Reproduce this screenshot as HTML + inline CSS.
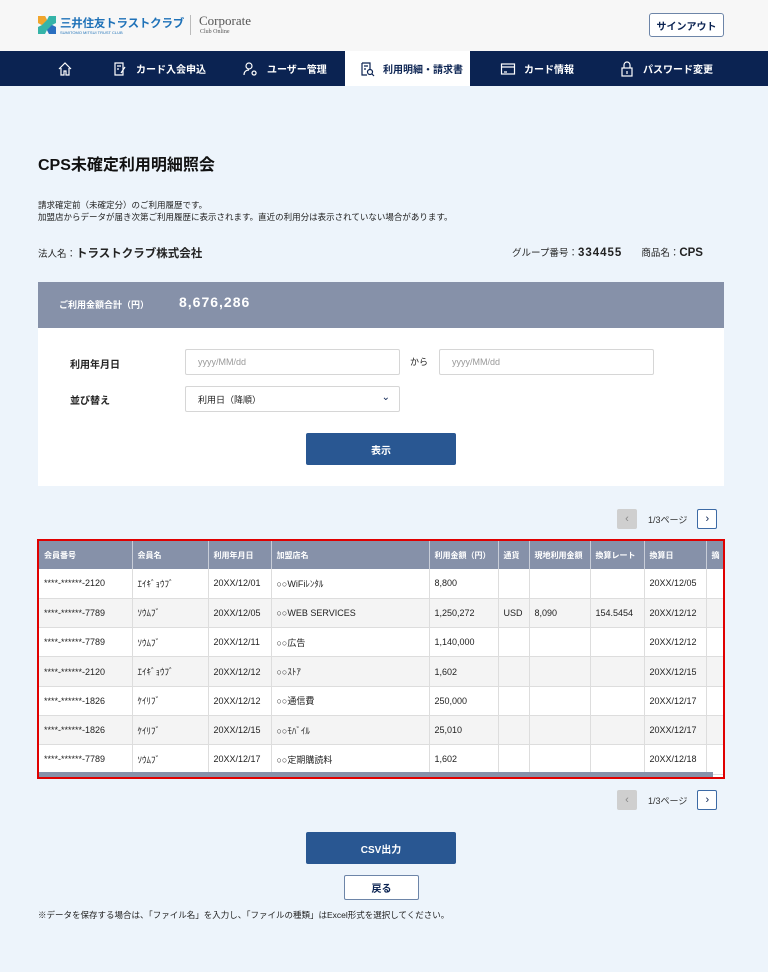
<!DOCTYPE html>
<html><head><meta charset="utf-8">
<style>
*{margin:0;padding:0;box-sizing:border-box}
body{width:768px;height:972px;background:#edf4fb;font-family:"Liberation Sans","Noto Sans CJK JP",sans-serif;color:#222;position:relative;overflow:hidden}
.abs{position:absolute}
.hdr{left:0;top:0;width:768px;height:51px;background:#f7f7f7}
.nav{left:0;top:51px;width:768px;height:35px;background:#0b2352}
.nav .it{position:absolute;top:0;height:35px;display:flex;align-items:center;color:#fff;font-size:10px;font-weight:bold;gap:8px}
.nav .act{background:#fff;color:#0b2352}
.btn{position:absolute;background:#295792;color:#fff;font-size:10px;font-weight:bold;display:flex;align-items:center;justify-content:center;border-radius:2px}
.wbtn{position:absolute;background:#fff;border:1px solid #6d85a8;color:#0b2352;font-size:10px;font-weight:bold;display:flex;align-items:center;justify-content:center;border-radius:2px}
.inp{position:absolute;background:#fff;border:1px solid #d6d6d6;border-radius:2px;font-size:9px;color:#999;padding-left:12px;display:flex;align-items:center}
table{border-collapse:collapse;font-size:9px;table-layout:fixed}
th{background:#8691a9;color:#fff;text-align:left;font-size:8px;font-weight:bold;height:28px;padding-left:5px;border-right:1px solid #c8cdd8;white-space:nowrap;overflow:hidden}
td{height:29.3px;padding-left:5px;border-right:1px solid #ddd;border-bottom:1px solid #ddd;white-space:nowrap;overflow:hidden;color:#222}
tr:nth-child(odd) td{background:#f4f4f4}
tr:nth-child(even) td{background:#fff}
.pg{position:absolute;display:flex;align-items:center;font-size:9px;color:#333}
.pg .p{width:20px;height:20px;background:#cfcfcf;color:#888;display:flex;align-items:center;justify-content:center;font-size:11px;border-radius:2px}
.pg .n{width:20px;height:20px;background:#fff;border:1px solid #3c6aa5;color:#0b2352;display:flex;align-items:center;justify-content:center;font-size:11px;border-radius:2px}
</style></head><body>
<div class="abs hdr"></div>
<svg class="abs" style="left:37px;top:15px" width="20" height="20" viewBox="0 0 20 20"><path d="M1 1h7l2 4 2-4h7v7l-4 2 4 2v7h-7l-2-4-2 4H1v-7l4-2-4-2z" fill="#35b4a8"/><path d="M1 1h7l2 4-5 5-4-2z" fill="#f1a52c"/><path d="M12 19l-2-4 5-5 4 2v7z" fill="#2a6fc0"/></svg>
<div class="abs" style="left:60px;top:15px;font-size:11.5px;color:#1f72b8;font-weight:bold;letter-spacing:-0.2px;white-space:nowrap">三井住友トラストクラブ</div>
<div class="abs" style="left:60px;top:30px;font-size:4px;color:#1f72b8;white-space:nowrap">SUMITOMO MITSUI TRUST CLUB</div>
<div class="abs" style="left:190px;top:15px;width:1px;height:20px;background:#bbb"></div>
<div class="abs" style="left:199px;top:13px;font-family:'Liberation Serif',serif;font-size:13px;color:#555">Corporate</div>
<div class="abs" style="left:200px;top:29px;font-family:'Liberation Serif',serif;font-size:6px;color:#555">Club Online</div>
<div class="wbtn" style="left:649px;top:13px;width:75px;height:24px;border-radius:3px">サインアウト</div>
<div class="abs nav">
<div class="it" style="left:57px"><svg width="16" height="16" viewBox="0 0 16 16" fill="none" stroke="#fff" stroke-width="1.2"><path d="M2 8L8 2l6 6M4 7v7h3v-4h2v4h3V7"/></svg></div>
<div class="it" style="left:112px"><svg width="16" height="16" viewBox="0 0 16 16" fill="none" stroke="#fff" stroke-width="1.2"><path d="M3 2h8v12H3zM5 5h4M5 8h2M9 12l4-6"/></svg>カード入会申込</div>
<div class="it" style="left:243px"><svg width="16" height="16" viewBox="0 0 16 16" fill="none" stroke="#fff" stroke-width="1.2"><circle cx="6" cy="5" r="3"/><path d="M1 14c0-4 3-5 5-5M11 10a2 2 0 1 0 .1 0"/></svg>ユーザー管理</div>
<div class="it act" style="left:345px;width:125px;padding-left:14px"><svg width="16" height="16" viewBox="0 0 16 16" fill="none" stroke="#0b2352" stroke-width="1.2"><path d="M3 2h8v6M3 2v12h5M5 5h4M5 8h2"/><circle cx="11" cy="11" r="2.5"/><path d="M13 13l2 2"/></svg>利用明細・請求書</div>
<div class="it" style="left:500px"><svg width="16" height="16" viewBox="0 0 16 16" fill="none" stroke="#fff" stroke-width="1.2"><rect x="1.5" y="3" width="13" height="10"/><path d="M1.5 6h13M4 11h3"/></svg>カード情報</div>
<div class="it" style="left:619px"><svg width="16" height="16" viewBox="0 0 16 16" fill="none" stroke="#fff" stroke-width="1.2"><rect x="3" y="7" width="10" height="8"/><path d="M5 7V4a3 3 0 0 1 6 0v3M8 10v3"/></svg>パスワード変更</div>
</div>
<div class="abs" style="left:38px;top:151px;font-size:16px;font-weight:bold;color:#111">CPS未確定利用明細照会</div>
<div class="abs" style="left:38px;top:199px;font-size:8.5px;line-height:12px;color:#222">請求確定前（未確定分）のご利用履歴です。<br>加盟店からデータが届き次第ご利用履歴に表示されます。直近の利用分は表示されていない場合があります。</div>
<div class="abs" style="left:38px;top:245px;font-size:9.5px">法人名：<b style="font-size:11.5px">トラストクラブ株式会社</b></div>
<div class="abs" style="left:512px;top:245px;font-size:9.5px">グループ番号：<b style="font-size:11.5px;letter-spacing:1px">334455</b>　　商品名：<b style="font-size:11.5px">CPS</b></div>
<div class="abs" style="left:38px;top:282px;width:686px;height:46px;background:#8691a9"></div>
<div class="abs" style="left:59px;top:298px;font-size:9px;color:#fff;font-weight:bold">ご利用金額合計（円）</div>
<div class="abs" style="left:179px;top:294px;font-size:14px;color:#fff;font-weight:bold;letter-spacing:1px">8,676,286</div>
<div class="abs" style="left:38px;top:328px;width:686px;height:158px;background:#fff"></div>
<div class="abs" style="left:70px;top:356px;font-size:10px;font-weight:bold">利用年月日</div>
<div class="inp" style="left:185px;top:349px;width:215px;height:26px">yyyy/MM/dd</div>
<div class="abs" style="left:410px;top:355px;font-size:9px">から</div>
<div class="inp" style="left:439px;top:349px;width:215px;height:26px">yyyy/MM/dd</div>
<div class="abs" style="left:70px;top:392px;font-size:10px;font-weight:bold">並び替え</div>
<div class="inp" style="left:185px;top:386px;width:215px;height:26px;color:#222">利用日（降順）<span style="position:absolute;right:9px;top:5px;color:#0b2352;font-size:10px">⌄</span></div>
<div class="btn" style="left:306px;top:433px;width:150px;height:32px">表示</div>
<div class="pg" style="left:617px;top:509px"><div class="p">‹</div><span style="margin:0 10px 0 11px">1/3ページ</span><div class="n">›</div></div>
<div class="abs" style="left:37px;top:539px;width:688px;height:240px;border:2px solid #e00000;overflow:hidden;background:#fff">
<table style="width:700px"><colgroup><col style="width:93px"><col style="width:76px"><col style="width:63px"><col style="width:158px"><col style="width:69px"><col style="width:31px"><col style="width:61px"><col style="width:54px"><col style="width:62px"><col style="width:33px"></colgroup>
<tr><th>会員番号</th><th>会員名</th><th>利用年月日</th><th>加盟店名</th><th>利用金額（円）</th><th>通貨</th><th>現地利用金額</th><th>換算レート</th><th>換算日</th><th>摘</th></tr>
<tr><td>****-******-2120</td><td>ｴｲｷﾞｮｳﾌﾞ</td><td>20XX/12/01</td><td>○○WiFiﾚﾝﾀﾙ</td><td>8,800</td><td></td><td></td><td></td><td>20XX/12/05</td><td></td></tr>
<tr><td>****-******-7789</td><td>ｿｳﾑﾌﾞ</td><td>20XX/12/05</td><td>○○WEB SERVICES</td><td>1,250,272</td><td>USD</td><td>8,090</td><td>154.5454</td><td>20XX/12/12</td><td></td></tr>
<tr><td>****-******-7789</td><td>ｿｳﾑﾌﾞ</td><td>20XX/12/11</td><td>○○広告</td><td>1,140,000</td><td></td><td></td><td></td><td>20XX/12/12</td><td></td></tr>
<tr><td>****-******-2120</td><td>ｴｲｷﾞｮｳﾌﾞ</td><td>20XX/12/12</td><td>○○ｽﾄｱ</td><td>1,602</td><td></td><td></td><td></td><td>20XX/12/15</td><td></td></tr>
<tr><td>****-******-1826</td><td>ｹｲﾘﾌﾞ</td><td>20XX/12/12</td><td>○○通信費</td><td>250,000</td><td></td><td></td><td></td><td>20XX/12/17</td><td></td></tr>
<tr><td>****-******-1826</td><td>ｹｲﾘﾌﾞ</td><td>20XX/12/15</td><td>○○ﾓﾊﾞｲﾙ</td><td>25,010</td><td></td><td></td><td></td><td>20XX/12/17</td><td></td></tr>
<tr><td>****-******-7789</td><td>ｿｳﾑﾌﾞ</td><td>20XX/12/17</td><td>○○定期購読料</td><td>1,602</td><td></td><td></td><td></td><td>20XX/12/18</td><td></td></tr>
</table>
<div style="position:absolute;left:0;bottom:0;width:674px;height:5px;background:#8691a9"></div>
</div>
<div class="pg" style="left:617px;top:790px"><div class="p">‹</div><span style="margin:0 10px 0 11px">1/3ページ</span><div class="n">›</div></div>
<div class="btn" style="left:306px;top:832px;width:150px;height:32px">CSV出力</div>
<div class="wbtn" style="left:344px;top:875px;width:75px;height:25px">戻る</div>
<div class="abs" style="left:38px;top:909px;font-size:8.5px">※データを保存する場合は、「ファイル名」を入力し、「ファイルの種類」はExcel形式を選択してください。</div>
</body></html>
